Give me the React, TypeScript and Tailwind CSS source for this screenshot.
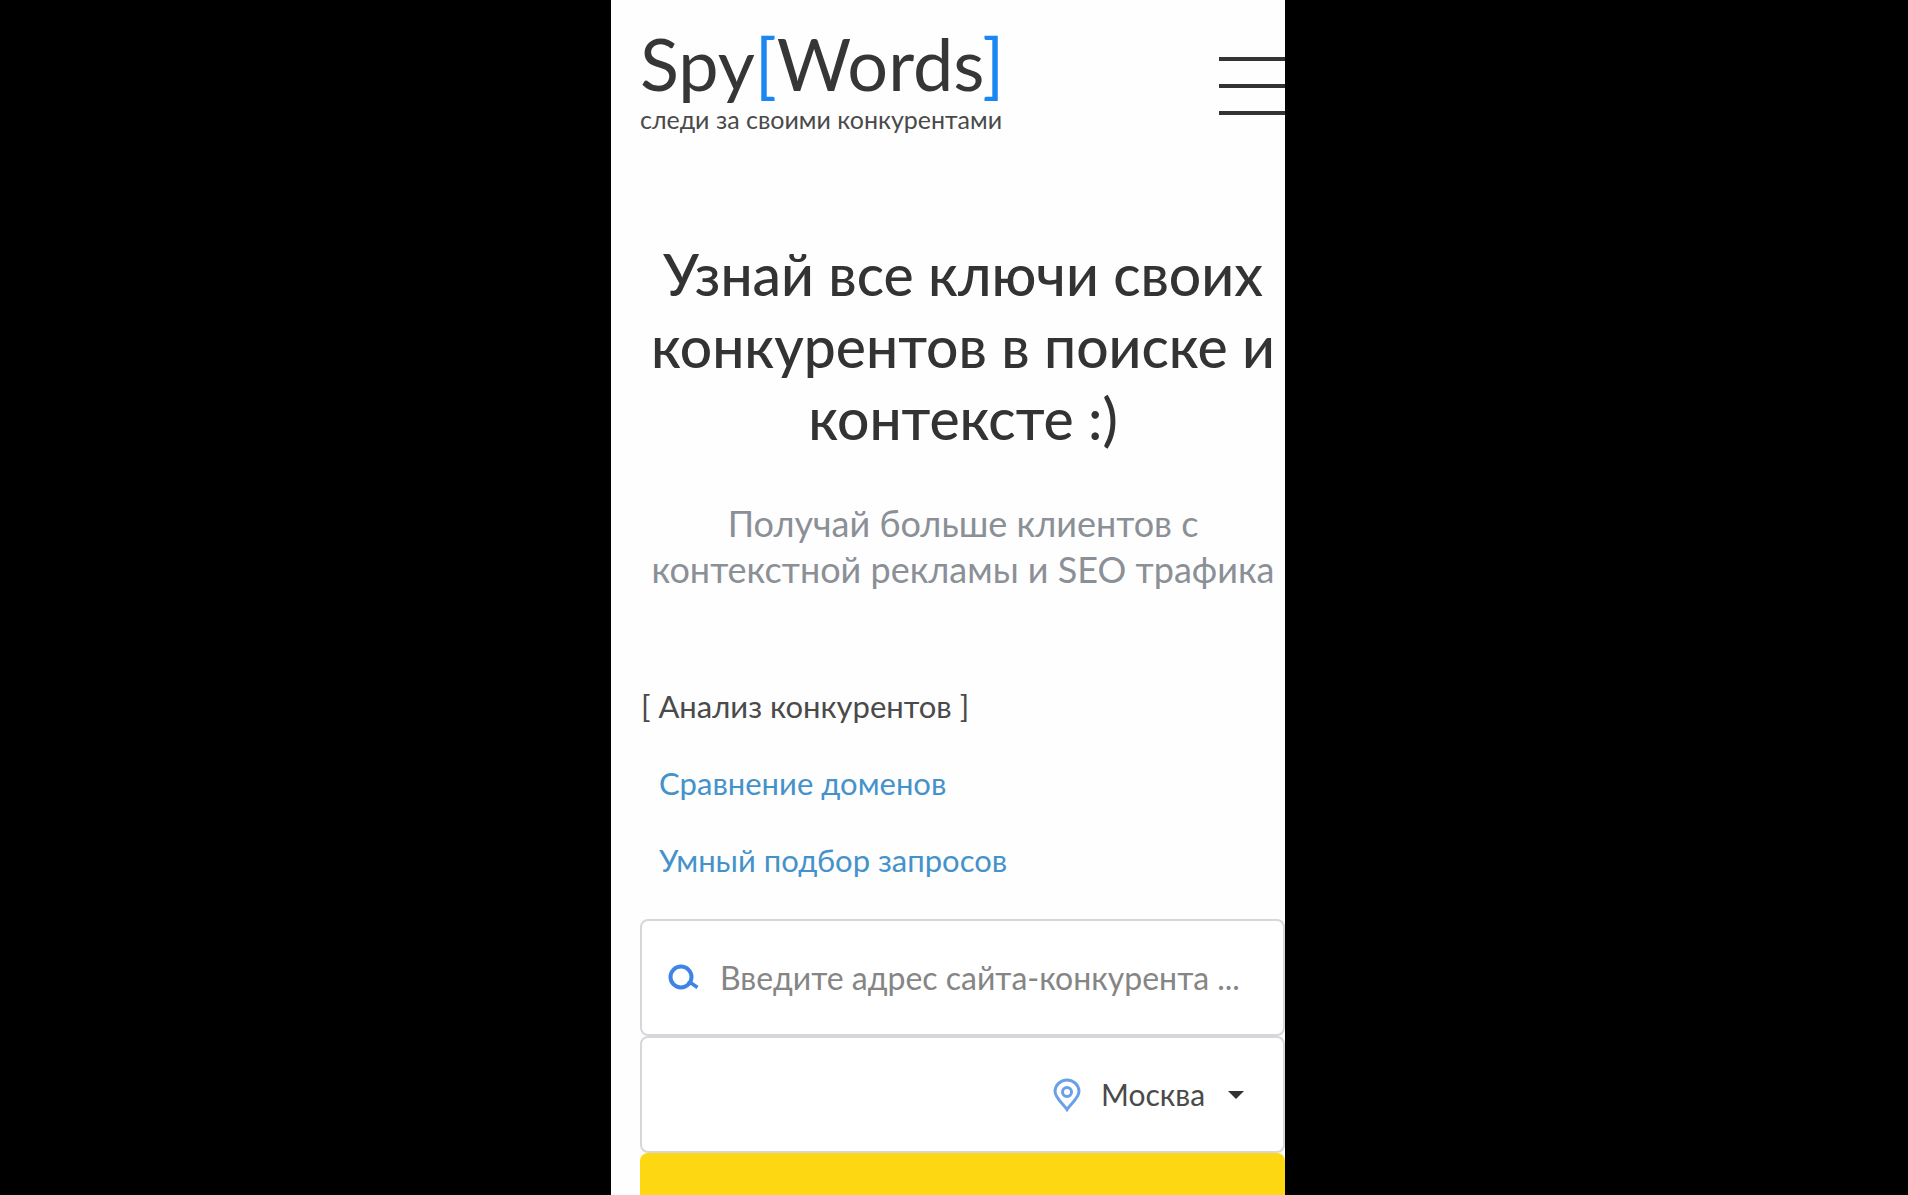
const tabs = ["Сравнение доменов", "Умный подбор запросов"];

function Header() {
  return (
    <header className="flex items-start justify-between pl-[29px]">
      <a href="/" className="mt-6 flex flex-col text-[#363636]">
        <span className="text-[72px] leading-[78px]">
          Spy<span className="text-[#1b87f3]">[</span>Words
          <span className="text-[#1b87f3]">]</span>
        </span>
        <span className="text-[25px] leading-[34px] text-[#4a4a4a]">следи за своими конкурентами</span>
      </a>
      <button aria-label="Меню" className="mt-[57px] flex w-[66px] flex-col gap-[23px]">
        <span className="h-1 w-full bg-[#333]" />
        <span className="h-1 w-full bg-[#333]" />
        <span className="h-1 w-full bg-[#333]" />
      </button>
    </header>
  );
}

function SearchIcon() {
  return (
    <svg viewBox="0 0 32 28" className="h-7 w-8 shrink-0" fill="none" stroke="#3d84e6" strokeWidth="4">
      <circle cx="13" cy="13" r="10.500" />
      <path d="M19.500 19 L23 19 L29.500 23.500" strokeWidth="3.500" />
    </svg>
  );
}

function PinIcon() {
  return (
    <svg viewBox="0 0 28 34" className="h-[34px] w-7 shrink-0" fill="none" stroke="#6b9fe6" strokeWidth="3">
      <path d="M14 31.500 C11 26.500 2 20 2 13.500 A12 11.500 0 0 1 26 13.500 C26 20 17 26.500 14 31.500 Z" />
      <circle cx="14" cy="14" r="4.500" />
    </svg>
  );
}

export default function App() {
  return (
    <div className="flex h-screen justify-center overflow-hidden bg-black pr-3 font-['Lato',sans-serif]">
      <main className="flex w-full max-w-[674px] flex-col overflow-hidden bg-[#fefefe]">
        <Header />

        <section className="mt-[102px] pl-[30px] text-center">
          <h1 className="text-[57px] leading-[72px] font-medium whitespace-nowrap text-[#333]">
            Узнай все ключи своих
            <br />
            конкурентов в поиске и
            <br />
            контексте :)
          </h1>
          <p className="mt-[46px] text-[36px] leading-[46px] whitespace-nowrap text-[#8b9097]">
            Получай больше клиентов с
            <br />
            контекстной рекламы и SEO трафика
          </p>
        </section>

        <nav className="mt-[94px] flex flex-col items-start gap-[37px] pl-[30px] text-[31px] leading-[40px]">
          <a href="#analysis" className="text-[#4a4a4a]">
            [<span className="px-2">Анализ конкурентов</span>]
          </a>
          {tabs.map((tab) => (
            <a key={tab} href="#" className="pl-[18px] text-[#4592cb]">
              {tab}
            </a>
          ))}
        </nav>

        <form className="mt-[39px] flex flex-1 flex-col pl-[29px]" onSubmit={(e) => e.preventDefault()}>
          <label className="flex h-[117px] shrink-0 items-center gap-5 rounded-lg border-2 border-[#d5d7da] bg-white pl-[26px]">
            <SearchIcon />
            <input
              type="text"
              aria-label="Адрес сайта"
              placeholder="Введите адрес сайта-конкурента ..."
              className="min-w-0 flex-1 text-[32px] outline-none placeholder:text-[#858585]"
            />
          </label>
          <label className="flex h-[117px] shrink-0 items-center justify-end gap-5 rounded-lg border-2 border-[#d5d7da] bg-white pr-[39px]">
            <PinIcon />
            <span className="relative flex items-center">
              <select aria-label="Регион" className="appearance-none pr-[38px] text-[30px] text-[#4a4a4a] outline-none">
                <option>Москва</option>
              </select>
              <svg viewBox="0 0 16 8" className="pointer-events-none absolute right-0 h-2 w-4" fill="#333">
                <path d="M0 0 H16 L8 8 Z" />
              </svg>
            </span>
          </label>
          <button type="submit" aria-label="Найти" className="min-h-10 flex-1 rounded-t-lg bg-[#fdd712]" />
        </form>
      </main>
    </div>
  );
}
